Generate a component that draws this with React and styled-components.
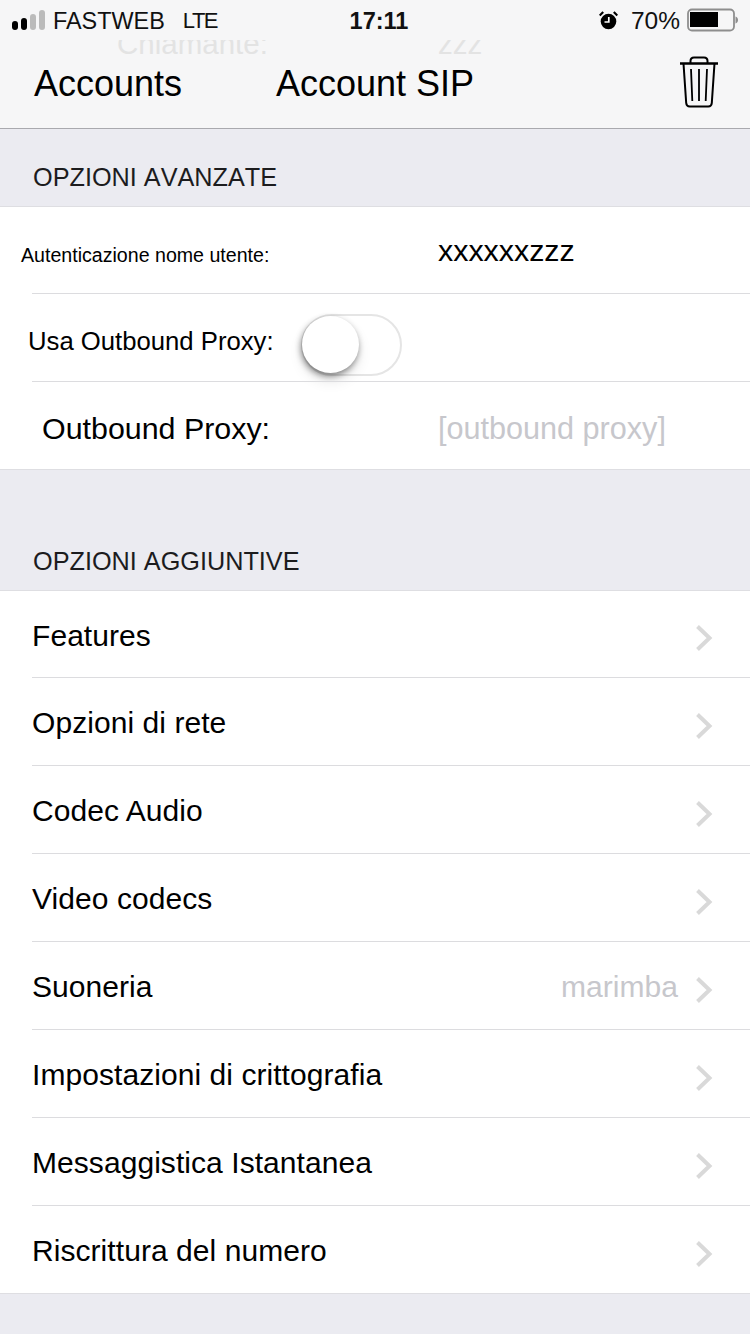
import React from 'react';
import styled, { createGlobalStyle } from 'styled-components';

const Global = createGlobalStyle`
html, body { margin: 0; padding: 0; background: #ebebf1; }
body { font-family: "Liberation Sans", Arial, sans-serif; color: #000; }
`

const Page = styled.div`
width: 750px;
height: 1334px;
overflow: hidden;
background: #ebebf1;
`
const Nav = styled.header`
position: relative;
height: 128px;
overflow: hidden;
background: #f6f6f7;
border-bottom: 1px solid #a9a9ae;
`
const StatusBar = styled.div`
height: 40px;
padding: 0 12px;
display: grid;
grid-template-columns: 1fr auto 1fr;
align-items: center;
font-size: 24px;
color: #111;
`
const StatusLeft = styled.div`
display: flex;
align-items: center;
`
const StatusRight = styled.div`
display: flex;
align-items: center;
justify-content: flex-end;
`
const Carrier = styled.span`
font-size: 23.4px;
margin: 2px 0 0 8px;
`
const Network = styled.span`
font-size: 22px;
letter-spacing: -1.5px;
margin: 2px 0 0 18px;
`
const Clock = styled.span`
font-weight: 700;
font-size: 23.5px;
margin: 2px 0 0 8px;
`
const Percent = styled.span`
font-size: 24.5px;
margin: 2px 7px 0 13px;
`
// content scrolled underneath the bar, only its lower part shows through
const GhostStrip = styled.div`
position: absolute;
top: 40px;
left: 0;
right: 0;
height: 15px;
overflow: hidden;
`
const Ghost = styled.span`
position: absolute;
top: -11px;
left: ${p => p.$left}px;
font-size: 29.5px;
line-height: 30px;
color: #e3e3e3;
`
const NavRow = styled.div`
display: flex;
align-items: center;
height: 56px;
padding: 0 31px 0 34px;
margin-top: 16px;
font-size: 36px;
`
const NavBack = styled.span`
width: 242px;
`
const NavTitle = styled.span`
flex: 1;
`
const TrashWrap = styled.span`
display: flex;
margin-bottom: 4px;
`
const SectionHead = styled.div`
height: ${p => p.$height}px;
box-sizing: border-box;
padding: 0 33px 14px;
display: flex;
align-items: flex-end;
font-size: 25.25px;
font-kerning: none;
color: #1c1c1e;
`
const Group = styled.section`
background: #fff;
border-top: 1px solid #dedee2;
border-bottom: 1px solid #dedee2;
`
const Row = styled.div`
position: relative;
box-sizing: border-box;
height: 88px;
display: flex;
align-items: center;
font-size: 30px;
letter-spacing: 0.06px;
margin-left: 32px;
&:first-child { height: 86px; }
& + & { border-top: 1px solid #dcdcdf; }
`
const FieldLabel = styled.span`
margin-left: ${p => p.$shift}px;
margin-top: ${p => p.$drop || 0}px;
font-size: ${p => p.$size}px;
letter-spacing: 0;
width: ${p => 406 - p.$shift}px;
flex: none;
`
const FieldValue = styled.span`
font-size: ${p => p.$size}px;
margin-top: ${p => p.$drop || 0}px;
letter-spacing: 0;
color: ${p => p.$muted ? '#c7c7cc' : '#000'};
`
const Toggle = styled.span`
position: absolute;
left: 269px;
top: 20px;
width: 101px;
height: 62px;
box-sizing: border-box;
border: 2px solid #e5e5e5;
border-radius: 31px;
background: #fff;
`
const Knob = styled.span`
position: absolute;
left: -1px;
top: 0;
width: 57px;
height: 57px;
border-radius: 50%;
background: #fff;
box-shadow: -1px 3px 6px rgba(0, 0, 0, 0.45), 0 8px 14px rgba(0, 0, 0, 0.1);
`
const Title = styled.span`
flex: 1;
margin-top: 3px;
`
const Detail = styled.span`
color: #c7c7cc;
margin: 3px 17px 0 0;
`
const Chevron = styled.svg`
width: 18px;
height: 28px;
margin-right: 37px;
margin-top: 8px;
flex: none;
`

const SignalIcon = () => (
    <svg width="33" height="20" viewBox="0 0 33 20">
        <rect x="0" y="11" width="6" height="9" rx="3" fill="#000" />
        <rect x="9" y="8" width="6" height="12" rx="3" fill="#000" />
        <rect x="18" y="4" width="6" height="16" rx="3" fill="#bbb" />
        <rect x="27" y="0" width="6" height="20" rx="3" fill="#bbb" />
    </svg>
)

const AlarmIcon = () => (
    <svg width="19" height="19" viewBox="0 0 19 19">
        <circle cx="9.5" cy="10.5" r="7.8" fill="#000" />
        <path d="M9.8 6v5H5.5" stroke="#fff" strokeWidth="1.7" fill="none" />
        <path d="M0.7 4.5 4.2 1M18.3 4.5 14.8 1" stroke="#000" strokeWidth="2.2" />
    </svg>
)

const BatteryIcon = () => (
    <svg width="51" height="24" viewBox="0 0 51 24">
        <rect x="1" y="1.5" width="46" height="21" rx="4" fill="none" stroke="#8e8e8e" strokeWidth="1.8" />
        <rect x="3" y="4" width="28" height="15" fill="#000" />
        <path d="M48.5 8.5c1.5.6 2.5 1.8 2.5 3.5s-1 2.9-2.5 3.5z" fill="#8e8e8e" />
    </svg>
)

const TrashIcon = () => (
    <svg width="40" height="52" viewBox="0 0 40 52" fill="none" stroke="#000">
        <path d="M1 7.5h38" strokeWidth="2.4" />
        <path d="M11.5 7V5C11.5 2.5 13 1.5 15 1.5h10c2 0 3.5 1 3.5 3.5v2" strokeWidth="2" />
        <path d="M4.5 7.5l2.7 39.5c.2 2.2 1.3 3.5 3.5 3.5h18.6c2.2 0 3.3-1.3 3.5-3.5l2.7-39.5" strokeWidth="2" />
        <path d="M12 13l1.3 32M20 13v32M28 13l-1.3 32" strokeWidth="1.8" />
    </svg>
)

const Arrow = () => (
    <Chevron viewBox="0 0 18 28" fill="none">
        <path d="M2.5 2.5 14.5 14 2.5 25.5" stroke="#d9d9d9" strokeWidth="4" />
    </Chevron>
)

const menu = [
    { name: 'Features' },
    { name: 'Opzioni di rete' },
    { name: 'Codec Audio' },
    { name: 'Video codecs' },
    { name: 'Suoneria', detail: 'marimba' },
    { name: 'Impostazioni di crittografia' },
    { name: 'Messaggistica Istantanea' },
    { name: 'Riscrittura del numero' },
]

const App = () => {
    return (
        <Page>
            <Global />
            <Nav>
                <GhostStrip>
                    <Ghost $left={117}>Chiamante:</Ghost>
                    <Ghost $left={438}>zzz</Ghost>
                </GhostStrip>
                <StatusBar>
                    <StatusLeft>
                        <SignalIcon />
                        <Carrier>FASTWEB</Carrier>
                        <Network>LTE</Network>
                    </StatusLeft>
                    <Clock>17:11</Clock>
                    <StatusRight>
                        <AlarmIcon />
                        <Percent>70%</Percent>
                        <BatteryIcon />
                    </StatusRight>
                </StatusBar>
                <NavRow>
                    <NavBack>Accounts</NavBack>
                    <NavTitle>Account SIP</NavTitle>
                    <TrashWrap><TrashIcon /></TrashWrap>
                </NavRow>
            </Nav>
            <SectionHead $height={77}>OPZIONI AVANZATE</SectionHead>
            <Group>
                <Row>
                    <FieldLabel $shift={-11} $size={19.6} $drop={10}>Autenticazione nome utente:</FieldLabel>
                    <FieldValue $size={30.4} $drop={1}>xxxxxxzzz</FieldValue>
                </Row>
                <Row>
                    <FieldLabel $shift={-4} $size={25.7} $drop={8}>Usa Outbound Proxy:</FieldLabel>
                    <Toggle><Knob /></Toggle>
                </Row>
                <Row>
                    <FieldLabel $shift={10} $size={30.4} $drop={6}>Outbound Proxy:</FieldLabel>
                    <FieldValue $size={30.6} $drop={6} $muted>[outbound proxy]</FieldValue>
                </Row>
            </Group>
            <SectionHead $height={120}>OPZIONI AGGIUNTIVE</SectionHead>
            <Group>
                {
                    menu.map((it, idx) => {
                        return (
                            <Row key={idx}>
                                <Title>{it.name}</Title>
                                {it.detail && <Detail>{it.detail}</Detail>}
                                <Arrow />
                            </Row>
                        )
                    })
                }
            </Group>
        </Page>
    )
}

export default App;
